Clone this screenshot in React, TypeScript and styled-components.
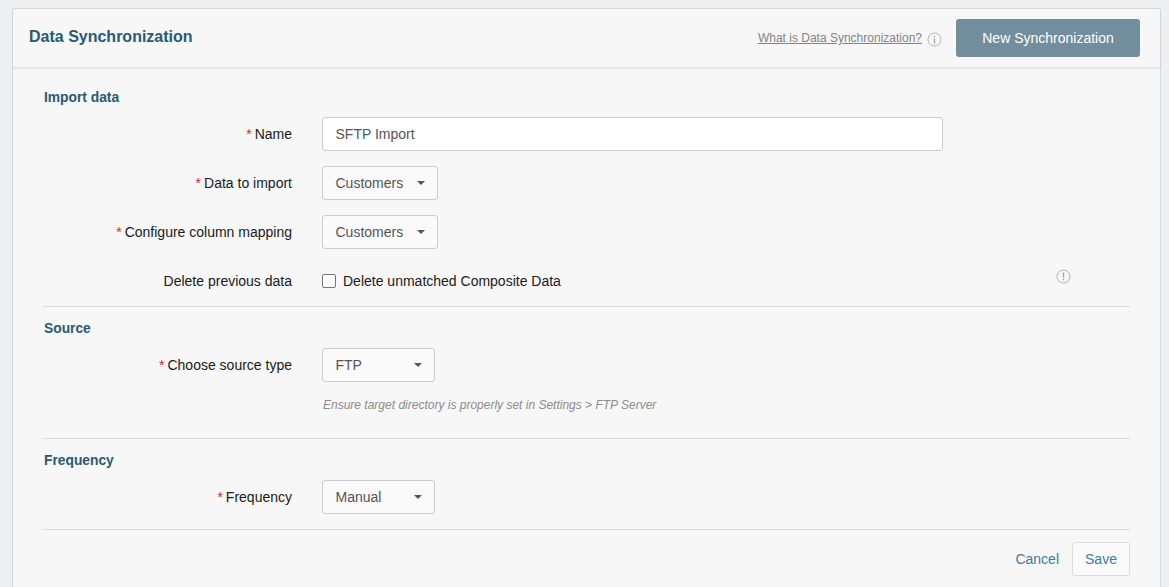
import React from 'react';
import styled, { createGlobalStyle } from 'styled-components';

const GlobalStyle = createGlobalStyle`
  html, body {
    margin: 0;
    padding: 0;
    height: 100%;
    background: #eeeff1;
    font-family: "Liberation Sans", Arial, sans-serif;
    overflow: hidden;
  }
`;

const Page = styled.div`
  padding: 8px 8px 0 12px;
  box-sizing: border-box;
  height: 587px;
`;

const Panel = styled.div`
  background: #f7f7f7;
  border: 1px solid #d9d9d9;
  border-bottom: 0;
  border-radius: 3px 3px 0 0;
  height: 579px;
  box-sizing: border-box;
`;

const Header = styled.header`
  display: flex;
  align-items: center;
  justify-content: space-between;
  height: 58px;
  padding: 0 20px 0 16px;
  border-bottom: 1px solid #e2e2e2;
  box-shadow: 0 1px 2px rgba(0, 0, 0, 0.08);
`;

const Title = styled.h1`
  margin: 0 0 3px;
  font-size: 16px;
  font-weight: 700;
  color: #295a73;
`;

const HeaderActions = styled.div`
  display: flex;
  align-items: center;
`;

const HelpLink = styled.a`
  font-size: 12px;
  color: #848484;
  text-decoration: underline;
  margin-right: 5px;
`;

const HelpIcon = styled.svg`
  display: block;
  width: 15px;
  height: 15px;
  margin-right: 14px;
  margin-top: 2px;
`;

const PrimaryButton = styled.button`
  width: 184px;
  height: 38px;
  border: 0;
  border-radius: 3px;
  background: #728e9d;
  color: #ffffff;
  font-family: inherit;
  font-size: 14px;
`;

const Body = styled.div`
  padding: 0 30px;
`;

const Section = styled.section<{ $pad: number }>`
  padding-bottom: ${(p) => p.$pad}px;
  border-bottom: 1px solid #dcdcdc;
`;

const SectionTitle = styled.h2<{ $top: number }>`
  margin: 0 0 11px;
  padding: ${(p) => p.$top}px 0 0 1px;
  line-height: 16px;
  font-size: 13.8px;
  font-weight: 700;
  color: #295a73;
`;

const Row = styled.div<{ $gap?: number }>`
  display: grid;
  grid-template-columns: 249px 1fr;
  column-gap: 30px;
  align-items: center;
  margin-top: ${(p) => p.$gap ?? 0}px;
`;

const Label = styled.label`
  text-align: right;
  font-size: 14px;
  color: #1a1a1a;
`;

const Required = styled.span`
  color: #e02020;
  margin-right: 3px;
`;

const TextInput = styled.input`
  display: block;
  width: 621px;
  height: 34px;
  box-sizing: border-box;
  padding: 0 12.5px;
  border: 1px solid #cccccc;
  border-radius: 3px;
  background: #ffffff;
  color: #555555;
  font-family: inherit;
  font-size: 14px;
`;

const Select = styled.div<{ $width: number }>`
  display: flex;
  align-items: center;
  justify-content: space-between;
  width: ${(p) => p.$width}px;
  height: 34px;
  box-sizing: border-box;
  padding: 0 12px 0 12.5px;
  border: 1px solid #cccccc;
  border-radius: 3px;
  background: #fafafa;
  color: #555555;
  font-size: 14px;
`;

const Caret = styled.span`
  width: 0;
  height: 0;
  border-left: 4px solid transparent;
  border-right: 4px solid transparent;
  border-top: 4px solid #555555;
`;

const CheckRow = styled.div`
  display: flex;
  align-items: center;
  justify-content: space-between;
  padding-right: 59.5px;
`;

const CheckLabel = styled.label`
  display: flex;
  align-items: center;
  font-size: 14px;
  color: #1a1a1a;
`;

const CheckBox = styled.span`
  width: 14px;
  height: 14px;
  box-sizing: border-box;
  margin-right: 7px;
  border: 1px solid #767676;
  border-radius: 2px;
  background: #ffffff;
`;

const NoticeIcon = styled.svg`
  display: block;
  width: 15px;
  height: 15px;
  margin-top: -10px;
`;

const Hint = styled.p`
  grid-column: 2;
  margin: 16px 0 0 1px;
  font-size: 12px;
  line-height: 14px;
  font-style: italic;
  color: #8c8c8c;
`;

const Footer = styled.footer`
  display: flex;
  align-items: center;
  justify-content: flex-end;
  gap: 13px;
  margin-top: 12px;
`;

const CancelLink = styled.a`
  font-size: 14px;
  color: #3a7ca5;
`;

const SaveButton = styled.button`
  width: 58px;
  height: 34px;
  border: 1px solid #dddddd;
  border-radius: 3px;
  background: #fafafa;
  color: #3a7ca5;
  font-family: inherit;
  font-size: 14px;
`;

const App: React.FC = () => {
  return (
    <>
      <GlobalStyle />
      <Page>
        <Panel>
          <Header>
            <Title>Data Synchronization</Title>
            <HeaderActions>
              <HelpLink>What is Data Synchronization?</HelpLink>
              <HelpIcon viewBox="0 0 15 15" fill="none">
                <circle cx="7.5" cy="7.5" r="6.5" stroke="#b5b5b5" />
                <path d="M7.5 6.5v5M7.5 3.8v1.4" stroke="#a0a0a0" strokeWidth="1.3" />
              </HelpIcon>
              <PrimaryButton>New Synchronization</PrimaryButton>
            </HeaderActions>
          </Header>
          <Body>
            <Section $pad={17}>
              <SectionTitle $top={22}>Import data</SectionTitle>
              <Row>
                <Label><Required>*</Required>Name</Label>
                <TextInput defaultValue="SFTP Import" />
              </Row>
              <Row $gap={15}>
                <Label><Required>*</Required>Data to import</Label>
                <Select $width={116}>Customers<Caret /></Select>
              </Row>
              <Row $gap={15}>
                <Label><Required>*</Required>Configure column mapping</Label>
                <Select $width={116}>Customers<Caret /></Select>
              </Row>
              <Row $gap={24}>
                <Label>Delete previous data</Label>
                <CheckRow>
                  <CheckLabel><CheckBox />Delete unmatched Composite Data</CheckLabel>
                  <NoticeIcon viewBox="0 0 15 15" fill="none">
                    <circle cx="7.5" cy="7.5" r="6.5" stroke="#b5b5b5" />
                    <path d="M7.5 3.5v5M7.5 9.8v1.4" stroke="#a0a0a0" strokeWidth="1.3" />
                  </NoticeIcon>
                </CheckRow>
              </Row>
            </Section>
            <Section $pad={26}>
              <SectionTitle $top={14}>Source</SectionTitle>
              <Row>
                <Label><Required>*</Required>Choose source type</Label>
                <Select $width={113}>FTP<Caret /></Select>
                <Hint>Ensure target directory is properly set in Settings &gt; FTP Server</Hint>
              </Row>
            </Section>
            <Section $pad={15}>
              <SectionTitle $top={14}>Frequency</SectionTitle>
              <Row>
                <Label><Required>*</Required>Frequency</Label>
                <Select $width={113}>Manual<Caret /></Select>
              </Row>
            </Section>
            <Footer>
              <CancelLink>Cancel</CancelLink>
              <SaveButton>Save</SaveButton>
            </Footer>
          </Body>
        </Panel>
      </Page>
    </>
  );
};

export default App;
